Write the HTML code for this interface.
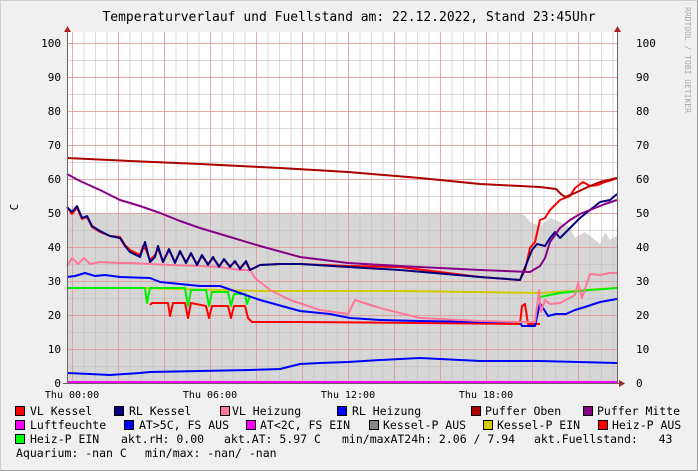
<!DOCTYPE html>
<html><head><meta charset="utf-8"><style>
html,body{margin:0;padding:0}
body{width:698px;height:471px;background:#f0f0f0;position:relative;overflow:hidden;font-family:"DejaVu Sans Mono","Liberation Mono",monospace;font-size:11.5px;color:#000}
.frame{position:absolute;left:0;top:0;width:696px;height:469px;border-top:1px solid #cfcfcf;border-left:1px solid #cfcfcf;border-right:1px solid #9e9e9e;border-bottom:1px solid #9e9e9e}
.t{position:absolute;white-space:pre;line-height:12px}
.b{position:absolute;width:8px;height:8px;border:1px solid #000}
</style></head><body>
<div class="frame"></div>
<svg width="698" height="471" style="position:absolute;left:0;top:0" font-family="DejaVu Sans Mono, Liberation Mono, monospace">
<defs>
<pattern id="vmin" x="72" y="0" width="11.5" height="471" patternUnits="userSpaceOnUse"><line x1="0.5" y1="0" x2="0.5" y2="471" stroke="#bbb" stroke-opacity="0.55"/></pattern>
<pattern id="hmin" x="0" y="383" width="698" height="17" patternUnits="userSpaceOnUse"><line x1="0" y1="0.5" x2="698" y2="0.5" stroke="#bbb" stroke-opacity="0.55"/></pattern>
<pattern id="vmaj" x="72" y="0" width="46" height="471" patternUnits="userSpaceOnUse"><line x1="0.5" y1="0" x2="0.5" y2="471" stroke="#e88" stroke-opacity="0.6"/></pattern>
<pattern id="hmaj" x="0" y="383" width="698" height="34" patternUnits="userSpaceOnUse"><line x1="0" y1="0.5" x2="698" y2="0.5" stroke="#e88" stroke-opacity="0.6"/></pattern>
</defs>
<rect x="67" y="32" width="550" height="351" fill="#fff"/>
<polygon fill="#d6d6d6" points="67,383 67,213 300,213 520,213 525,216 530,222 540,226 550,218 560,222 570,228 575,238 585,232 590,236 600,244 605,232 610,240 617,236 617,383"/>
<rect x="67" y="32" width="550" height="351" fill="url(#vmin)"/>
<rect x="67" y="32" width="550" height="351" fill="url(#hmin)"/>
<rect x="67" y="32" width="550" height="351" fill="url(#vmaj)"/>
<rect x="67" y="32" width="550" height="351" fill="url(#hmaj)"/>
<g fill="none" stroke-width="2" stroke-linejoin="round">
<polyline stroke="#0000ff" points="67,373 90,374 110,375 140,373 150,372 200,371 250,370 280,369 300,364 320,363 348,362 380,360 420,358 480,361 540,361 617,363"/>
<polyline stroke="#ff00ff" points="67,382 617,382"/>
<polyline stroke="#cccc00" points="67,288 140,288 260,291 400,291 540,293 617,288"/>
<polyline stroke="#00ee00" points="67,288 140,288 145,288 147,303 150,288 185,288 188,306 191,290 206,290 209,306 212,292 228,292 231,306 234,294 245,294 247,304 250,296"/>
<polyline stroke="#ff0000" points="150,305 152,303 168,303 170,316 173,303 185,303 188,318 191,303 206,306 209,318 212,306 228,306 231,318 234,306 245,306 248,318 252,322 300,322 420,323 520,324 522,306 525,304 528,324 540,324"/>
<polyline stroke="#00ee00" points="540,297 560,293 590,290 617,288"/>
<polyline stroke="#0000ff" points="67,277 75,276 85,273 95,276 105,275 120,277 150,278 160,282 180,284 200,286 220,286 240,293 260,300 300,311 330,314 350,318 380,320 420,321 480,322 520,322 522,326 535,326 540,303 548,316 556,314 566,314 575,310 585,307 600,302 617,299"/>
<polyline stroke="#ff7799" points="67,266 72,258 78,264 84,258 90,264 100,262 120,263 130,263 150,264 170,265 200,266 220,267 240,270 250,270 255,278 270,290 290,300 320,310 348,314 355,300 380,308 420,318 480,321 520,322 535,322 539,290 541,312 545,300 550,304 560,303 575,295 578,283 582,298 590,274 600,275 610,273 617,273"/>
<polyline stroke="#ff0000" points="67,207 72,214 77,208 82,219 87,217 92,227 100,232 110,236 120,237 125,245 130,250 140,255 143,246 146,250 150,260 155,255 158,248 163,262 169,250 175,262 180,252 186,262 191,254 197,264 202,256 208,264 213,258 219,266 224,260 230,266 235,262 240,268 246,262 250,270 260,265 280,264 300,264 348,266 400,267 480,277 520,280 525,270 530,248 535,242 540,220 545,218 550,210 560,200 570,196 575,188 583,182 590,186 598,185 605,182 612,180 617,178"/>
<polyline stroke="#000080" points="67,207 72,212 77,206 82,218 87,216 92,226 100,231 110,236 120,238 125,246 130,252 140,257 145,242 150,262 155,257 158,246 163,262 169,249 175,263 180,251 186,263 191,253 197,265 202,255 208,265 213,257 219,267 224,259 230,267 235,261 240,269 246,261 250,270 260,265 280,264 300,264 348,267 400,270 480,277 520,280 528,260 532,250 537,244 545,246 550,238 555,232 560,238 570,228 580,218 590,210 600,202 610,200 617,194"/>
<polyline stroke="#880088" points="67,174 80,181 100,190 120,200 140,206 160,213 180,221 200,228 230,237 260,246 300,257 348,263 400,266 480,270 530,272 540,266 545,258 550,242 560,228 570,220 580,214 595,208 605,204 617,200"/>
<polyline stroke="#aa0000" points="67,158 130,161 200,164 280,168 348,172 420,178 480,184 540,187 556,189 561,194 565,197 575,193 590,186 600,182 617,178"/>
</g>
<line x1="67.5" y1="28" x2="67.5" y2="384" stroke="#666"/>
<polygon points="64,32 71,32 67.5,26" fill="#aa2222"/>
<line x1="617.5" y1="28" x2="617.5" y2="384" stroke="#666"/>
<polygon points="614,32 621,32 617.5,26" fill="#aa2222"/>
<line x1="63" y1="383.5" x2="621" y2="383.5" stroke="#666"/>
<polygon points="619,380 619,387 625,383.5" fill="#aa2222"/>
<g font-size="11" fill="#000" text-anchor="end">
<text x="61" y="47">100</text><text x="61" y="81">90</text><text x="61" y="115">80</text><text x="61" y="149">70</text><text x="61" y="183">60</text><text x="61" y="217">50</text><text x="61" y="251">40</text><text x="61" y="285">30</text><text x="61" y="319">20</text><text x="61" y="353">10</text><text x="61" y="387">0</text>
</g>
<g font-size="11" fill="#000">
<text x="636" y="47">100</text><text x="636" y="81">90</text><text x="636" y="115">80</text><text x="636" y="149">70</text><text x="636" y="183">60</text><text x="636" y="217">50</text><text x="636" y="251">40</text><text x="636" y="285">30</text><text x="636" y="319">20</text><text x="636" y="353">10</text><text x="636" y="387">0</text>
</g>
<g font-size="10" fill="#000" text-anchor="middle">
<text x="72" y="398">Thu 00:00</text><text x="210" y="398">Thu 06:00</text><text x="348" y="398">Thu 12:00</text><text x="486" y="398">Thu 18:00</text>
</g>
<text x="349" y="21" font-size="13" text-anchor="middle">Temperaturverlauf und Fuellstand am: 22.12.2022, Stand 23:45Uhr</text>
<text transform="translate(18,207) rotate(-90)" font-size="11" text-anchor="middle">C</text>
<text transform="translate(685,60) rotate(90)" font-size="8" fill="#aaa" text-anchor="middle">RRDTOOL / TOBI OETIKER</text>
</svg>
<div class="b" style="left:15px;top:406px;background:#ff0000"></div><div class="t" style="left:30px;top:405px">VL Kessel</div>
<div class="b" style="left:114px;top:406px;background:#000080"></div><div class="t" style="left:129px;top:405px">RL Kessel</div>
<div class="b" style="left:220px;top:406px;background:#ff7799"></div><div class="t" style="left:232px;top:405px">VL Heizung</div>
<div class="b" style="left:337px;top:406px;background:#0000ff"></div><div class="t" style="left:352px;top:405px">RL Heizung</div>
<div class="b" style="left:471px;top:406px;background:#aa0000"></div><div class="t" style="left:485px;top:405px">Puffer Oben</div>
<div class="b" style="left:583px;top:406px;background:#880088"></div><div class="t" style="left:597px;top:405px">Puffer Mitte</div>
<div class="b" style="left:15px;top:420px;background:#ff00ff"></div><div class="t" style="left:30px;top:419px">Luftfeuchte</div>
<div class="b" style="left:124px;top:420px;background:#0000ff"></div><div class="t" style="left:139px;top:419px">AT&gt;5C, FS AUS</div>
<div class="b" style="left:246px;top:420px;background:#ff00ff"></div><div class="t" style="left:260px;top:419px">AT&lt;2C, FS EIN</div>
<div class="b" style="left:369px;top:420px;background:#888888"></div><div class="t" style="left:383px;top:419px">Kessel-P AUS</div>
<div class="b" style="left:483px;top:420px;background:#cccc00"></div><div class="t" style="left:497px;top:419px">Kessel-P EIN</div>
<div class="b" style="left:598px;top:420px;background:#ff0000"></div><div class="t" style="left:612px;top:419px">Heiz-P AUS</div>
<div class="b" style="left:15px;top:434px;background:#00ff00"></div><div class="t" style="left:30px;top:433px">Heiz-P EIN</div>
<div class="t" style="left:121px;top:433px">akt.rH: 0.00</div>
<div class="t" style="left:224px;top:433px">akt.AT: 5.97 C</div>
<div class="t" style="left:342px;top:433px">min/maxAT24h: 2.06 / 7.94</div>
<div class="t" style="left:534px;top:433px">akt.Fuellstand:   43</div>
<div class="t" style="left:16px;top:447px">Aquarium: -nan C</div>
<div class="t" style="left:145px;top:447px">min/max: -nan/ -nan</div>
</body></html>
